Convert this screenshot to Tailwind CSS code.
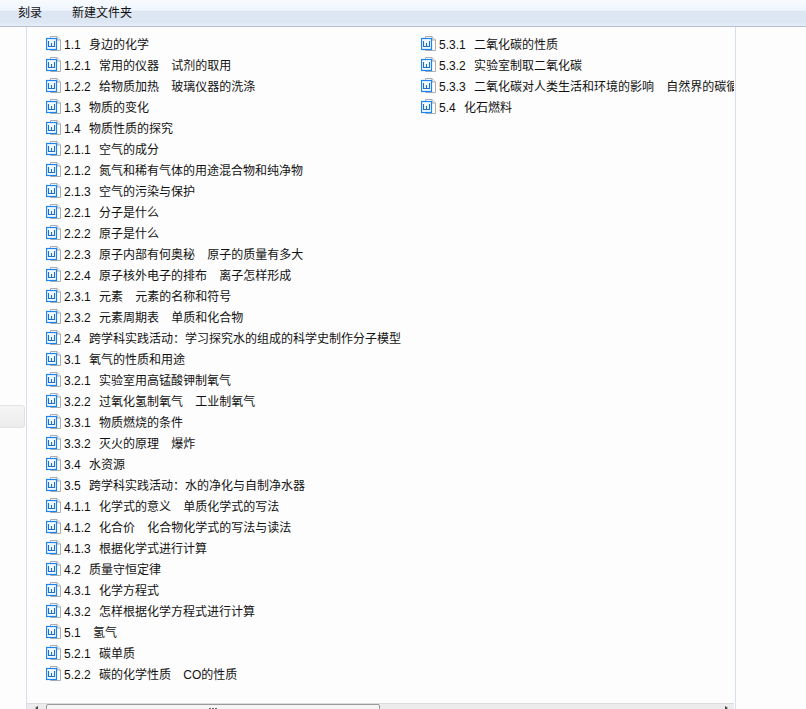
<!DOCTYPE html>
<html lang="zh">
<head>
<meta charset="utf-8">
<script src="https://cdn.jsdelivr.net/npm/@tailwindcss/browser@4"></script>
</head>
<body class="w-[806px] h-[709px] overflow-hidden bg-[#fdfdfd] text-[12px] text-[#111111] [word-spacing:0.8px] font-['Liberation_Sans','Noto_Sans_CJK_SC',sans-serif]">
<svg class="hidden"><symbol id="w" viewBox="0 0 15 15"><path d="M4.5.5H11L14.5 4V14.5H4.5Z" fill="#fff" stroke="#adadad"/><path d="M11 .5V4H14.5" fill="#eee" stroke="#adadad"/><rect x=".5" y="2.5" width="10" height="11" fill="#f4f9ff" stroke="#1a84f2" stroke-width="1.2"/><path d="M2.5 5V10.5H8.5V5M5.5 7V10.5" fill="none" stroke="#1f6fc4" stroke-width="1.1"/></symbol></svg>
<div class="h-[27px] flex items-center gap-[30px] pl-[18px] border-b border-[#b4bfcf] bg-[linear-gradient(#f7fbff_0%,#eff5fd_40%,#dde6f3_42%,#dde6f3_85%,#e6eef8_100%)]">
<span>刻录</span><span>新建文件夹</span>
</div>
<div class="relative flex h-[682px]">
<div class="relative w-[27px] shrink-0 border-r border-[#d5dfee]">
<div class="absolute left-[-4px] top-[378px] w-[29px] h-[23px] rounded-[3px] border border-[#e2e2e2] bg-[linear-gradient(#f6f6f6,#ebebeb)]"></div>
</div>
<div class="relative w-[708px] shrink-0 overflow-hidden">
<div class="flex w-[707px] overflow-hidden pt-[6px] pl-[19px]">
<ul class="w-[375px] shrink-0">
<li class="flex items-center h-[21px] gap-[3px]"><svg class="w-[15px] h-[15px] shrink-0"><use href="#w"/></svg><span class="whitespace-pre pt-[2px]">1.1  身边的化学</span></li>
<li class="flex items-center h-[21px] gap-[3px]"><svg class="w-[15px] h-[15px] shrink-0"><use href="#w"/></svg><span class="whitespace-pre pt-[2px]">1.2.1  常用的仪器   试剂的取用</span></li>
<li class="flex items-center h-[21px] gap-[3px]"><svg class="w-[15px] h-[15px] shrink-0"><use href="#w"/></svg><span class="whitespace-pre pt-[2px]">1.2.2  给物质加热   玻璃仪器的洗涤</span></li>
<li class="flex items-center h-[21px] gap-[3px]"><svg class="w-[15px] h-[15px] shrink-0"><use href="#w"/></svg><span class="whitespace-pre pt-[2px]">1.3  物质的变化</span></li>
<li class="flex items-center h-[21px] gap-[3px]"><svg class="w-[15px] h-[15px] shrink-0"><use href="#w"/></svg><span class="whitespace-pre pt-[2px]">1.4  物质性质的探究</span></li>
<li class="flex items-center h-[21px] gap-[3px]"><svg class="w-[15px] h-[15px] shrink-0"><use href="#w"/></svg><span class="whitespace-pre pt-[2px]">2.1.1  空气的成分</span></li>
<li class="flex items-center h-[21px] gap-[3px]"><svg class="w-[15px] h-[15px] shrink-0"><use href="#w"/></svg><span class="whitespace-pre pt-[2px]">2.1.2  氮气和稀有气体的用途混合物和纯净物</span></li>
<li class="flex items-center h-[21px] gap-[3px]"><svg class="w-[15px] h-[15px] shrink-0"><use href="#w"/></svg><span class="whitespace-pre pt-[2px]">2.1.3  空气的污染与保护</span></li>
<li class="flex items-center h-[21px] gap-[3px]"><svg class="w-[15px] h-[15px] shrink-0"><use href="#w"/></svg><span class="whitespace-pre pt-[2px]">2.2.1  分子是什么</span></li>
<li class="flex items-center h-[21px] gap-[3px]"><svg class="w-[15px] h-[15px] shrink-0"><use href="#w"/></svg><span class="whitespace-pre pt-[2px]">2.2.2  原子是什么</span></li>
<li class="flex items-center h-[21px] gap-[3px]"><svg class="w-[15px] h-[15px] shrink-0"><use href="#w"/></svg><span class="whitespace-pre pt-[2px]">2.2.3  原子内部有何奥秘   原子的质量有多大</span></li>
<li class="flex items-center h-[21px] gap-[3px]"><svg class="w-[15px] h-[15px] shrink-0"><use href="#w"/></svg><span class="whitespace-pre pt-[2px]">2.2.4  原子核外电子的排布   离子怎样形成</span></li>
<li class="flex items-center h-[21px] gap-[3px]"><svg class="w-[15px] h-[15px] shrink-0"><use href="#w"/></svg><span class="whitespace-pre pt-[2px]">2.3.1  元素   元素的名称和符号</span></li>
<li class="flex items-center h-[21px] gap-[3px]"><svg class="w-[15px] h-[15px] shrink-0"><use href="#w"/></svg><span class="whitespace-pre pt-[2px]">2.3.2  元素周期表   单质和化合物</span></li>
<li class="flex items-center h-[21px] gap-[3px]"><svg class="w-[15px] h-[15px] shrink-0"><use href="#w"/></svg><span class="whitespace-pre pt-[2px]">2.4  跨学科实践活动：学习探究水的组成的科学史制作分子模型</span></li>
<li class="flex items-center h-[21px] gap-[3px]"><svg class="w-[15px] h-[15px] shrink-0"><use href="#w"/></svg><span class="whitespace-pre pt-[2px]">3.1  氧气的性质和用途</span></li>
<li class="flex items-center h-[21px] gap-[3px]"><svg class="w-[15px] h-[15px] shrink-0"><use href="#w"/></svg><span class="whitespace-pre pt-[2px]">3.2.1  实验室用高锰酸钾制氧气</span></li>
<li class="flex items-center h-[21px] gap-[3px]"><svg class="w-[15px] h-[15px] shrink-0"><use href="#w"/></svg><span class="whitespace-pre pt-[2px]">3.2.2  过氧化氢制氧气   工业制氧气</span></li>
<li class="flex items-center h-[21px] gap-[3px]"><svg class="w-[15px] h-[15px] shrink-0"><use href="#w"/></svg><span class="whitespace-pre pt-[2px]">3.3.1  物质燃烧的条件</span></li>
<li class="flex items-center h-[21px] gap-[3px]"><svg class="w-[15px] h-[15px] shrink-0"><use href="#w"/></svg><span class="whitespace-pre pt-[2px]">3.3.2  灭火的原理   爆炸</span></li>
<li class="flex items-center h-[21px] gap-[3px]"><svg class="w-[15px] h-[15px] shrink-0"><use href="#w"/></svg><span class="whitespace-pre pt-[2px]">3.4  水资源</span></li>
<li class="flex items-center h-[21px] gap-[3px]"><svg class="w-[15px] h-[15px] shrink-0"><use href="#w"/></svg><span class="whitespace-pre pt-[2px]">3.5  跨学科实践活动：水的净化与自制净水器</span></li>
<li class="flex items-center h-[21px] gap-[3px]"><svg class="w-[15px] h-[15px] shrink-0"><use href="#w"/></svg><span class="whitespace-pre pt-[2px]">4.1.1  化学式的意义   单质化学式的写法</span></li>
<li class="flex items-center h-[21px] gap-[3px]"><svg class="w-[15px] h-[15px] shrink-0"><use href="#w"/></svg><span class="whitespace-pre pt-[2px]">4.1.2  化合价   化合物化学式的写法与读法</span></li>
<li class="flex items-center h-[21px] gap-[3px]"><svg class="w-[15px] h-[15px] shrink-0"><use href="#w"/></svg><span class="whitespace-pre pt-[2px]">4.1.3  根据化学式进行计算</span></li>
<li class="flex items-center h-[21px] gap-[3px]"><svg class="w-[15px] h-[15px] shrink-0"><use href="#w"/></svg><span class="whitespace-pre pt-[2px]">4.2  质量守恒定律</span></li>
<li class="flex items-center h-[21px] gap-[3px]"><svg class="w-[15px] h-[15px] shrink-0"><use href="#w"/></svg><span class="whitespace-pre pt-[2px]">4.3.1  化学方程式</span></li>
<li class="flex items-center h-[21px] gap-[3px]"><svg class="w-[15px] h-[15px] shrink-0"><use href="#w"/></svg><span class="whitespace-pre pt-[2px]">4.3.2  怎样根据化学方程式进行计算</span></li>
<li class="flex items-center h-[21px] gap-[3px]"><svg class="w-[15px] h-[15px] shrink-0"><use href="#w"/></svg><span class="whitespace-pre pt-[2px]">5.1   氢气</span></li>
<li class="flex items-center h-[21px] gap-[3px]"><svg class="w-[15px] h-[15px] shrink-0"><use href="#w"/></svg><span class="whitespace-pre pt-[2px]">5.2.1  碳单质</span></li>
<li class="flex items-center h-[21px] gap-[3px]"><svg class="w-[15px] h-[15px] shrink-0"><use href="#w"/></svg><span class="whitespace-pre pt-[2px]">5.2.2  碳的化学性质   CO的性质</span></li>
</ul>
<ul class="flex-1 min-w-0">
<li class="flex items-center h-[21px] gap-[3px]"><svg class="w-[15px] h-[15px] shrink-0"><use href="#w"/></svg><span class="whitespace-pre pt-[2px]">5.3.1  二氧化碳的性质</span></li>
<li class="flex items-center h-[21px] gap-[3px]"><svg class="w-[15px] h-[15px] shrink-0"><use href="#w"/></svg><span class="whitespace-pre pt-[2px]">5.3.2  实验室制取二氧化碳</span></li>
<li class="flex items-center h-[21px] gap-[3px]"><svg class="w-[15px] h-[15px] shrink-0"><use href="#w"/></svg><span class="whitespace-pre pt-[2px]">5.3.3  二氧化碳对人类生活和环境的影响   自然界的碳循环</span></li>
<li class="flex items-center h-[21px] gap-[3px]"><svg class="w-[15px] h-[15px] shrink-0"><use href="#w"/></svg><span class="whitespace-pre pt-[2px]">5.4  化石燃料</span></li>
</ul>
</div>
<div class="absolute left-0 right-[1px] bottom-0 h-[6px] bg-[#ececec] border-t border-[#dcdcdc]">
<svg class="absolute left-[8px] top-[2px] w-[4px] h-[4px]" viewBox="0 0 4 4"><path d="M3 0 0 2 3 4Z" fill="#444"/></svg>
<div class="absolute left-[19px] top-0 w-[334px] h-[8px] bg-[#f4f4f4] border border-[#9a9a9a] rounded-[2px] flex justify-center gap-[1px] pt-[3px]">
<i class="w-[2px] h-[2px] bg-[#666]"></i><i class="w-[2px] h-[2px] bg-[#666]"></i><i class="w-[2px] h-[2px] bg-[#666]"></i>
</div>
<svg class="absolute left-[697px] top-[2px] w-[4px] h-[4px]" viewBox="0 0 4 4"><path d="M1 0 4 2 1 4Z" fill="#444"/></svg>
</div>
</div>
<div class="flex-1 border-l border-[#d5dfee]"></div>
</div>
</body>
</html>
